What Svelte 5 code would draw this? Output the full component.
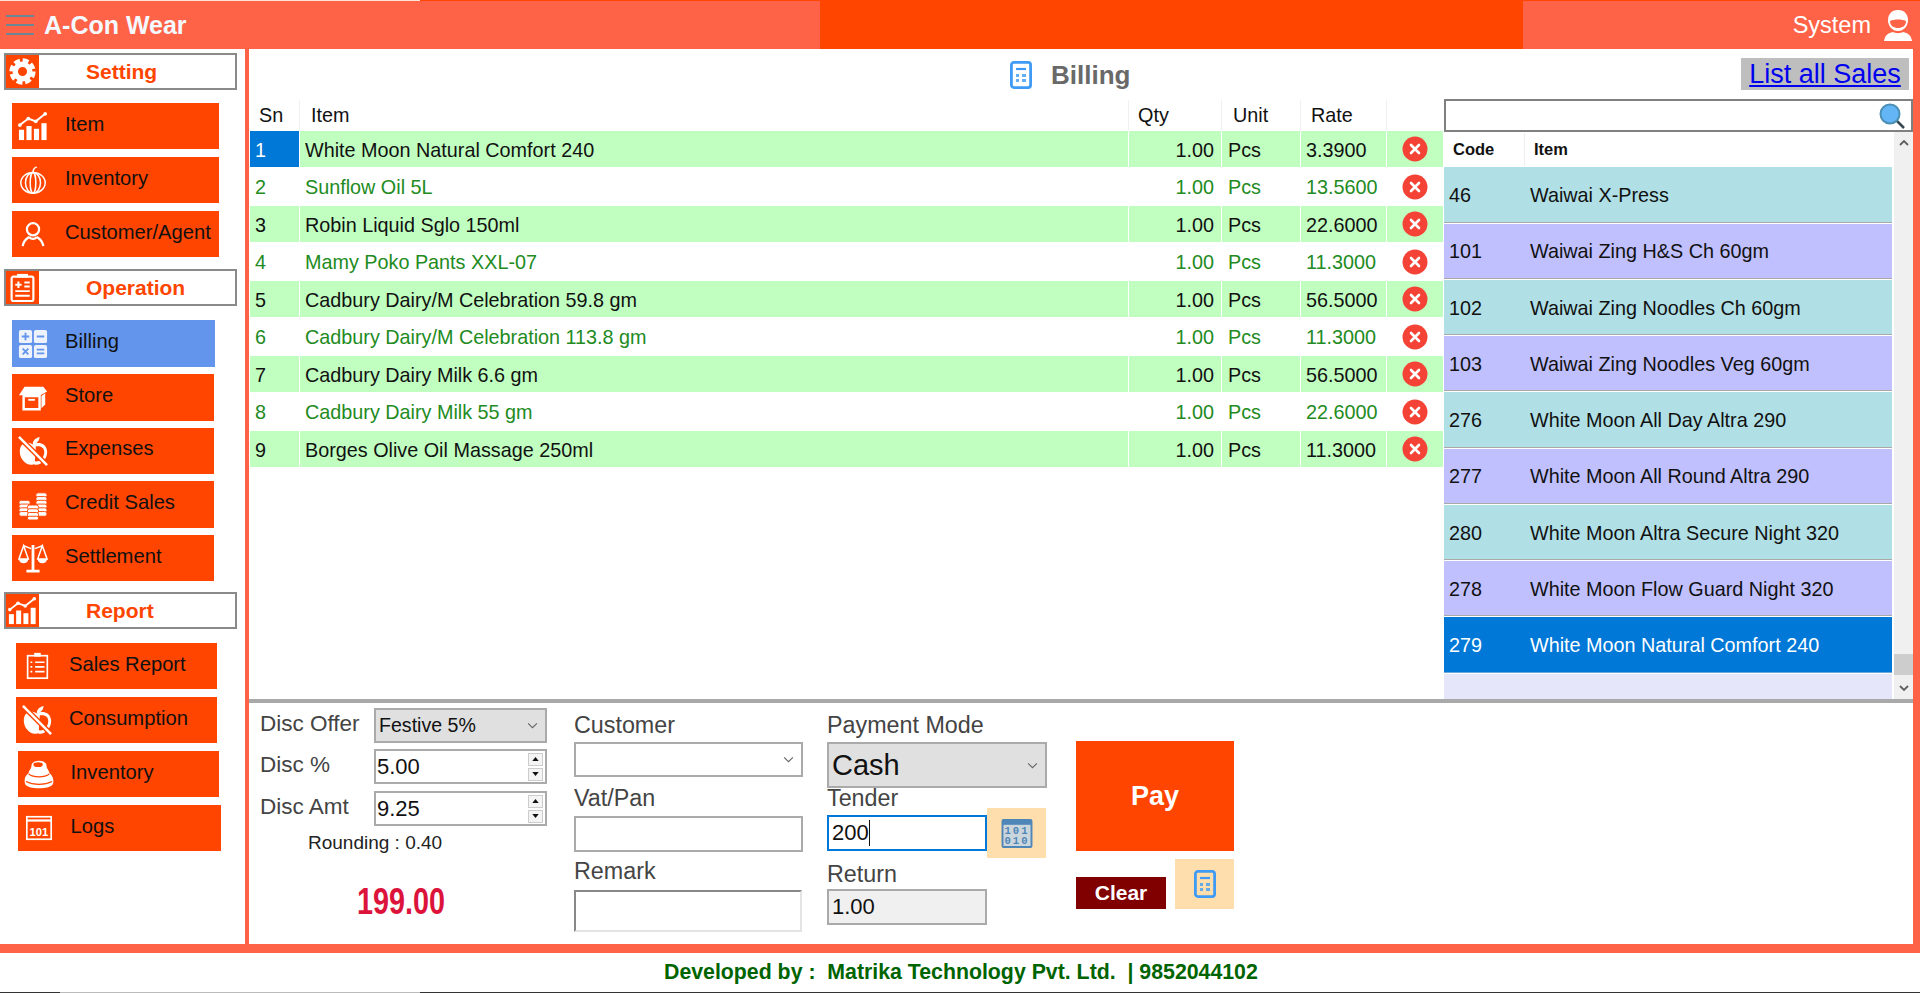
<script>
  const rows = [
    ['White Moon Natural Comfort 240', '3.3900'],
    ['Sunflow Oil 5L', '13.5600'],
    ['Robin Liquid Sglo 150ml', '22.6000'],
    ['Mamy Poko Pants XXL-07', '11.3000'],
    ['Cadbury Dairy/M Celebration 59.8 gm', '56.5000'],
    ['Cadbury Dairy/M Celebration 113.8 gm', '11.3000'],
    ['Cadbury Dairy Milk 6.6 gm', '56.5000'],
    ['Cadbury Dairy Milk 55 gm', '22.6000'],
    ['Borges Olive Oil Massage 250ml', '11.3000']
  ];

  const products = [
    ['46', 'Waiwai X-Press'],
    ['101', 'Waiwai Zing H&S Ch 60gm'],
    ['102', 'Waiwai Zing Noodles Ch 60gm'],
    ['103', 'Waiwai Zing Noodles Veg 60gm'],
    ['276', 'White Moon All Day Altra 290'],
    ['277', 'White Moon All Round Altra 290'],
    ['280', 'White Moon Altra Secure Night 320'],
    ['278', 'White Moon Flow Guard Night 320'],
    ['279', 'White Moon Natural Comfort 240']
  ];

  const menu = [
    { name: 'setting', title: 'Setting', icon: 'gear', items: [
      { label: 'Item', icon: 'chart' },
      { label: 'Inventory', icon: 'pumpkin' },
      { label: 'Customer/Agent', icon: 'user' }
    ]},
    { name: 'operation', title: 'Operation', icon: 'clipboard', items: [
      { label: 'Billing', icon: 'tiles', cls: 'active' },
      { label: 'Store', icon: 'box' },
      { label: 'Expenses', icon: 'apple' },
      { label: 'Credit Sales', icon: 'coins' },
      { label: 'Settlement', icon: 'scale' }
    ]},
    { name: 'report', title: 'Report', icon: 'chart', items: [
      { label: 'Sales Report', icon: 'list' },
      { label: 'Consumption', icon: 'apple' },
      { label: 'Inventory', icon: 'pot', cls: 'shift' },
      { label: 'Logs', icon: 'logs', cls: 'shift wide' }
    ]}
  ];
</script>

{#snippet icon(name)}
  <svg class="ico" viewBox="0 0 32 32" fill="none" stroke="#fff" stroke-width="2">
    {#if name === 'gear'}
      <circle cx="16" cy="16" r="8" stroke-width="6" />
      <circle cx="16" cy="16" r="12" stroke-width="5" stroke-dasharray="6.4 3" />
    {:else if name === 'chart'}
      <g fill="#fff" stroke="none">
        <rect x="1" y="20" width="5.500" height="11" />
        <rect x="9" y="16" width="5.500" height="15" />
        <rect x="17" y="19" width="5.500" height="12" />
        <rect x="25" y="13" width="5.500" height="18" />
        <circle cx="2" cy="15" r="2" /><circle cx="11" cy="8" r="2" /><circle cx="19" cy="11" r="2" /><circle cx="29" cy="3" r="2" />
      </g>
      <polyline points="2,15 11,8 19,11 29,3" />
    {:else if name === 'pumpkin'}
      <g stroke-width="1.6">
        <ellipse cx="16" cy="19" rx="13" ry="11" />
        <ellipse cx="16" cy="19" rx="8" ry="11" />
        <ellipse cx="16" cy="19" rx="3" ry="11" />
        <path d="M16 8 C16 5 17 3 20 2" />
      </g>
    {:else if name === 'user'}
      <g stroke-width="2.4">
        <circle cx="16" cy="11" r="6.5" />
        <path d="M5 29 C6 22 10 21 12 19 M27 29 C26 22 22 21 20 19 M12 19 C14 22 18 22 20 19" />
      </g>
    {:else if name === 'clipboard'}
      <rect x="4" y="4" width="24" height="27" rx="2" stroke-width="2.4" />
      <path d="M10 1 H22 V5 H10 Z" fill="#fff" stroke="none" />
      <path d="M8 13 H15 M11.500 9.500 V16.500 M18 10.500 H24 M18 15 H24 M8 20 H24 M8 25 H24" stroke-width="2.2" />
    {:else if name === 'tiles'}
      <g fill="#edf2fd" stroke="none">
        <rect x="1" y="1" width="14" height="14" rx="2" />
        <rect x="17" y="1" width="14" height="14" rx="2" />
        <rect x="1" y="17" width="14" height="14" rx="2" />
        <rect x="17" y="17" width="14" height="14" rx="2" />
      </g>
      <path d="M4 8 H12 M8 4 V12 M20 8 H28 M5 21 L11 27 M11 21 L5 27 M20 22 H28 M20 26 H28" stroke="#6495ed" />
    {:else if name === 'box'}
      <path d="M6 15 H23 V29 H6 Z" stroke-width="2.600" />
      <path d="M1 14 L7 5 H27 L31 10 L24 14 Z" fill="#fff" stroke="none" />
      <path d="M25 15 L29 12 V24 L25 28 Z" fill="#fff" stroke="none" />
      <path d="M11 19 H18" stroke-width="2" />
    {:else if name === 'apple'}
      <path d="M2 15 C3 6 11 6 16 9 C21 6 30 7 31 16 C32 25 23 33 17 30 C10 33 1 25 2 15 Z" fill="#fff" stroke="none" />
      <path d="M16 9 C15 6 18 2 23 1 C23 5 20 8 16 9 Z" fill="#fff" stroke="none" />
      <path d="M19 11 C25 10 28 13 28 17 C28 23 23 28 18 27 Z" fill="#ff4500" stroke="none" />
      <path d="M1 1 L31 31" stroke="#ff4500" stroke-width="5.500" />
      <path d="M1 1 L31 31" stroke-width="2.600" />
    {:else if name === 'coins'}
      <g fill="#fff" stroke="#ff4500" stroke-width="1">
        <rect x="1" y="11" width="12" height="5" rx="2.500" />
        <rect x="1" y="15" width="12" height="5" rx="2.500" />
        <rect x="1" y="19" width="12" height="5" rx="2.500" />
        <rect x="1" y="23" width="12" height="5" rx="2.500" />
        <rect x="19" y="3" width="12" height="5" rx="2.500" />
        <rect x="19" y="7" width="12" height="5" rx="2.500" />
        <rect x="19" y="11" width="12" height="5" rx="2.500" />
        <rect x="19" y="15" width="12" height="5" rx="2.500" />
        <rect x="19" y="19" width="12" height="5" rx="2.500" />
        <rect x="19" y="23" width="12" height="5" rx="2.500" />
        <rect x="10" y="16" width="12" height="5" rx="2.500" />
        <rect x="10" y="20" width="12" height="5" rx="2.500" />
        <rect x="10" y="24" width="12" height="5" rx="2.500" />
        <rect x="10" y="28" width="12" height="4" rx="2" />
      </g>
    {:else if name === 'scale'}
      <path d="M16 2 V29 M9 30 H23" stroke-width="3" />
      <path d="M6 3 L14 6 M18 6 L26 3" stroke-width="1.6" />
      <path d="M6 3 L1 17 H11 Z M26 3 L21 17 H31 Z" stroke-width="1.6" />
      <path d="M1 17 H11 C11 23 1 23 1 17 Z M21 17 H31 C31 23 21 23 21 17 Z" fill="#fff" stroke="none" />
    {:else if name === 'list'}
      <g stroke-width="1.8">
        <rect x="6" y="5" width="21" height="24" />
        <path d="M13 2 H20 V6 H13 Z" fill="#fff" stroke="none" />
        <path d="M9 12 H11 M14 12 H24 M9 17 H11 M14 17 H24 M9 22 H11 M14 22 H24" />
      </g>
    {:else if name === 'pot'}
      <path d="M8 7 C8 0 24 0 24 7 C24 11 27 12 27 15 C31 18 32 23 31 26 C29 33 3 33 1 26 C0 22 1 18 5 15 C5 12 8 11 8 7 Z" fill="#fff" stroke="none" />
      <ellipse cx="15" cy="6" rx="5" ry="2.500" fill="#ff4500" stroke="none" />
      <path d="M5 16 C10 20 22 20 27 16 M2 24 C10 28 22 28 30 24" stroke="#ff4500" stroke-width="1.200" />
    {:else if name === 'logs'}
      <rect x="3" y="4" width="26" height="24" stroke-width="1.8" />
      <path d="M3 8 H29" stroke-width="2.4" />
      <text x="16" y="24" text-anchor="middle" fill="#fff" stroke="none" font-size="12" font-weight="700" font-family="Liberation Sans, sans-serif">101</text>
    {/if}
  </svg>
{/snippet}

{#snippet calc()}
  <svg class="calc" viewBox="0 0 22 28" fill="none" stroke="#3f9bf5" stroke-width="2.800">
    <rect x="1.400" y="1.400" width="19.200" height="25.200" rx="2.500" />
    <path d="M6 8 H16" stroke-width="2.200" />
    <path d="M6 14.500 H9 M12 14.500 H16 M6 19.500 H9 M12 19.500 H16" stroke-width="3" opacity="0.8" />
  </svg>
{/snippet}

{#snippet chevron()}
  <svg class="chev" viewBox="0 0 10 6" fill="none" stroke="#666" stroke-width="1"><path d="M1 1 L5 5 L9 1" /></svg>
{/snippet}

{#snippet spinner()}
  <div class="spin">
    <span><svg viewBox="0 0 8 5"><path d="M4 0 L8 5 H0 Z" fill="#111" /></svg></span>
    <span><svg viewBox="0 0 8 5"><path d="M0 0 H8 L4 5 Z" fill="#111" /></svg></span>
  </div>
{/snippet}

<div class="page">
  <div class="topline"></div>
  <header>
    <div class="hleft">
      <div class="burger"><i></i><i></i><i></i></div>
      <span class="brand">A-Con Wear</span>
    </div>
    <div class="hmid"></div>
    <div class="hright">
      <span>System</span>
      <svg class="sysuser" viewBox="0 0 28 32" fill="#fff">
        <path d="M14 1 C21 1 24 6 24 11 C24 17 20 22 14 22 C8 22 4 17 4 11 C4 6 7 1 14 1 Z" />
        <path d="M6 12 C10 10 18 10 22 12 C22 17 18 19 14 19 C10 19 6 17 6 12 Z" fill="#ff6347" />
        <path d="M9 23 C11 24.500 17 24.500 19 23 C24 24 27 26 28 32 H0 C1 26 4 24 9 23 Z" />
      </svg>
    </div>
  </header>

  <div class="body">
    <aside>
      {#each menu as group}
        <section class={group.name}>
          <div class="ghead">
            <div class="gico">{@render icon(group.icon)}</div>
            <span>{group.title}</span>
          </div>
          {#each group.items as it}
            <div class="btn {it.cls || ''}">
              {@render icon(it.icon)}
              <span>{it.label}</span>
            </div>
          {/each}
        </section>
      {/each}
    </aside>

    <main>
      <div class="titlerow">
        <div class="title">
          {@render calc()}
          <span>Billing</span>
        </div>
        <a class="listall" href="#sales">List all Sales</a>
      </div>

      <div class="work">
        <div class="bill">
          <div class="grid head">
            <div>Sn</div><div>Item</div><div>Qty</div><div>Unit</div><div>Rate</div><div></div>
          </div>
          {#each rows as r, i}
            <div class="grid row" class:alt={i % 2 === 1}>
              <div class="sn" class:sel={i === 0}>{i + 1}</div>
              <div class="nm">{r[0]}</div>
              <div class="qty">1.00</div>
              <div class="unit">Pcs</div>
              <div class="rate">{r[1]}</div>
              <div class="del">
                <svg viewBox="0 0 26 26"><circle cx="13" cy="13" r="12.500" fill="#f44336" /><path d="M9 9 L17 17 M17 9 L9 17" stroke="#fff" stroke-width="2.600" stroke-linecap="round" /></svg>
              </div>
            </div>
          {/each}
        </div>

        <div class="picker">
          <div class="search">
            <svg viewBox="0 0 26 26">
              <path d="M17 17 L25 25" stroke="#37474f" stroke-width="2.500" />
              <circle cx="11" cy="11" r="9.500" fill="#64b5f6" stroke="#4b8fb5" stroke-width="2" />
            </svg>
          </div>
          <div class="pick-body">
            <div class="plist">
              <div class="phead"><div>Code</div><div>Item</div></div>
              {#each products as p, i}
                <div class="prow" class:odd={i % 2 === 1} class:sel={i === 8}>
                  <div class="pcode">{p[0]}</div>
                  <div>{p[1]}</div>
                </div>
              {/each}
              <div class="pfill"></div>
            </div>
            <div class="scroll">
              <svg viewBox="0 0 10 6" fill="none" stroke="#606060" stroke-width="1.800"><path d="M1 5 L5 1 L9 5" /></svg>
              <div class="thumb"></div>
              <svg viewBox="0 0 10 6" fill="none" stroke="#606060" stroke-width="1.800"><path d="M1 1 L5 5 L9 1" /></svg>
            </div>
          </div>
        </div>
      </div>

      <div class="form">
        <div class="c1">
          <div class="line first">
            <label for="offer">Disc Offer</label>
            <div class="box grey" id="offer"><span>Festive 5%</span>{@render chevron()}</div>
          </div>
          <div class="line">
            <label for="pct">Disc %</label>
            <div class="box num" id="pct"><span>5.00</span>{@render spinner()}</div>
          </div>
          <div class="line">
            <label for="amt">Disc Amt</label>
            <div class="box num" id="amt"><span>9.25</span>{@render spinner()}</div>
          </div>
          <div class="rounding">Rounding : 0.40</div>
          <div class="total">199.00</div>
        </div>

        <div class="c2">
          <div class="lb l-first">Customer</div>
          <div class="box cust">{@render chevron()}</div>
          <div class="lb l-vat">Vat/Pan</div>
          <div class="box vat"></div>
          <div class="lb l-rem">Remark</div>
          <div class="box remark"></div>
        </div>

        <div class="c3">
          <div class="lb l-first">Payment Mode</div>
          <div class="box grey mode"><span>Cash</span>{@render chevron()}</div>
          <div class="lb l-tender">Tender</div>
          <div class="tender-row">
            <div class="box tender"><span>200</span><i class="caret"></i></div>
            <div class="numpad">
              <svg viewBox="0 0 32 30">
                <rect x="1" y="1" width="30" height="28" rx="1" fill="#cbd6dc" stroke="#4f86b8" stroke-width="2" />
                <rect x="1" y="1" width="30" height="5" fill="#4f86b8" />
                <text x="16" y="16" text-anchor="middle" font-size="11" font-weight="700" letter-spacing="2" fill="#4f86b8" font-family="Liberation Mono, monospace">101</text>
                <text x="16" y="26" text-anchor="middle" font-size="11" font-weight="700" letter-spacing="2" fill="#4f86b8" font-family="Liberation Mono, monospace">010</text>
              </svg>
            </div>
          </div>
          <div class="lb l-return">Return</div>
          <div class="box ret"><span>1.00</span></div>
        </div>

        <div class="c4">
          <div class="pay">Pay</div>
          <div class="c4row">
            <div class="clear">Clear</div>
            <div class="calcbtn">{@render calc()}</div>
          </div>
        </div>
      </div>
    </main>
  </div>

  <footer>Developed by :  Matrika Technology Pvt. Ltd.  | 9852044102</footer>
  <div class="bottomline"></div>
</div>

<style>
  :global(body) {
    margin: 0;
    overflow: hidden;
    font-family: 'Liberation Sans', Arial, sans-serif;
  }

  .page {
    width: 1920px;
    height: 993px;
    display: flex;
    flex-direction: column;
    background: #fff;
    color: #111;
  }

  .topline {
    height: 1px;
    background: linear-gradient(to right, #ffe3d6 420px, #ff4500 420px);
  }

  header {
    height: 49px;
    display: flex;
    background: #ff6347;
    color: #fff;
  }
  .hleft {
    width: 820px;
    display: flex;
    align-items: center;
    padding-left: 6px;
    box-sizing: border-box;
  }
  .burger {
    width: 28px;
    display: flex;
    flex-direction: column;
    gap: 6.500px;
    margin-right: 10px;
  }
  .burger i {
    height: 2.500px;
    background: #6b8796;
  }
  .brand {
    font-size: 25px;
    font-weight: 700;
    color: #f4f8ff;
  }
  .hmid {
    width: 703px;
    background: #ff4500;
  }
  .hright {
    flex: 1;
    display: flex;
    align-items: center;
    justify-content: flex-end;
    font-size: 23.500px;
    padding-right: 8px;
  }
  .sysuser {
    width: 28px;
    height: 32px;
    margin-left: 13px;
  }

  .body {
    height: 895px;
    display: flex;
    background: #ff6347;
    padding-right: 7px;
  }

  aside {
    width: 245px;
    background: #fff;
    padding-top: 4px;
    box-sizing: border-box;
    margin-right: 4px;
  }
  .ghead {
    margin-left: 4px;
    width: 233px;
    height: 37px;
    box-sizing: border-box;
    border: 2px solid #8a8a8a;
    display: flex;
    align-items: center;
    color: #ff4500;
    font-size: 21px;
    font-weight: 700;
  }
  .gico {
    width: 33px;
    height: 33px;
    background: #ff4500;
    display: flex;
    align-items: center;
    justify-content: center;
    margin-right: 47px;
    flex: none;
  }
  .gico .ico {
    width: 29px;
    height: 29px;
    margin: 0;
  }
  .btn {
    height: 46px;
    background: #ff4500;
    display: flex;
    align-items: center;
    padding-left: 6px;
    box-sizing: border-box;
    font-size: 20.200px;
    margin-top: 8px;
  }
  .btn span {
    padding-bottom: 4px;
  }
  .ico {
    width: 30px;
    height: 30px;
    flex: none;
    margin-right: 17px;
  }
  .setting .btn {
    margin-left: 12px;
    width: 207px;
  }
  .setting .btn:nth-child(2) {
    margin-top: 13px;
  }
  .operation {
    margin-top: 12px;
  }
  .report {
    margin-top: 11px;
  }
  .operation .btn {
    margin-left: 12px;
    width: 202px;
    height: 46.600px;
    margin-top: 7px;
  }
  .operation .btn:nth-child(2) {
    margin-top: 14px;
  }
  .operation .btn.active {
    background: #6495ed;
    width: 203px;
  }
  .report .btn {
    margin-left: 16px;
    width: 201px;
  }
  .report .btn:nth-child(2) {
    margin-top: 14px;
  }
  .report .btn.shift {
    margin-left: 17.500px;
  }
  .report .btn.wide {
    width: 203px;
  }

  main {
    flex: 1;
    min-width: 0;
    background: #fff;
    display: flex;
    flex-direction: column;
  }
  .titlerow {
    height: 50px;
    display: flex;
    align-items: center;
    justify-content: space-between;
    padding: 0 4px 0 761px;
  }
  .title {
    display: flex;
    align-items: center;
    color: #696969;
    font-size: 26px;
    font-weight: 700;
    padding-top: 2px;
  }
  .calc {
    width: 22px;
    height: 28px;
    margin-right: 19px;
  }
  .listall {
    width: 168px;
    height: 32px;
    background: #bebebe;
    color: #0000ee;
    font-size: 27px;
    line-height: 32px;
    text-align: center;
  }

  .work {
    height: 600px;
    display: flex;
  }
  .bill {
    width: 1193px;
    margin-left: 1px;
    padding-top: 1px;
    font-size: 19.800px;
  }
  .grid {
    display: grid;
    grid-template-columns: 49px 828px 92px 78px 85px 56px;
    column-gap: 1px;
  }
  .head {
    height: 31px;
    line-height: 31px;
    background: #f1f1f1;
  }
  .head div {
    background: #fff;
  }
  .head div:nth-child(1) { padding-left: 9px; }
  .head div:nth-child(2) { padding-left: 11px; }
  .head div:nth-child(3) { padding-left: 9px; }
  .head div:nth-child(4) { padding-left: 11px; }
  .head div:nth-child(5) { padding-left: 10px; }

  .row {
    height: 36px;
    grid-template-rows: 100%;
    line-height: 38px;
  }
  .row > div {
    background: #c1ffc1;
  }
  .row.alt {
    height: 39px;
    line-height: 41px;
    color: #228b22;
  }
  .row.alt > div {
    background: #fff;
  }
  .row > .sn {
    padding-left: 5px;
  }
  .row > .sn.sel {
    background: #0078d7;
    color: #fff;
  }
  .nm {
    padding-left: 5px;
  }
  .qty {
    text-align: right;
    padding-right: 7px;
  }
  .unit {
    padding-left: 6px;
  }
  .rate {
    padding-left: 5px;
  }
  .del {
    display: flex;
    align-items: center;
    justify-content: center;
    padding-right: 1px;
  }
  .del svg {
    width: 26px;
    height: 26px;
  }

  .picker {
    width: 469px;
    margin-left: 1px;
    display: flex;
    flex-direction: column;
    font-size: 19.800px;
  }
  .search {
    height: 33px;
    box-sizing: border-box;
    border: 2px solid #808080;
    display: flex;
    align-items: center;
    justify-content: flex-end;
    padding-right: 6px;
  }
  .search svg {
    width: 26px;
    height: 26px;
  }
  .pick-body {
    flex: 1;
    display: flex;
    min-height: 0;
  }
  .plist {
    width: 448px;
    display: flex;
    flex-direction: column;
  }
  .phead {
    height: 35px;
    flex: none;
    display: flex;
    align-items: center;
    font-size: 16.500px;
    font-weight: 700;
  }
  .phead div:first-child {
    width: 81px;
    padding-left: 9px;
    box-sizing: border-box;
    height: 33px;
    line-height: 33px;
    border-right: 1px solid #eee;
  }
  .phead div:last-child {
    padding-left: 9px;
  }
  .prow {
    flex: none;
    box-sizing: border-box;
    height: 55.250px;
    padding-top: 2px;
    border-bottom: 1px solid #a9a9a9;
    margin-bottom: 1px;
    background: #b0e0e6;
    display: flex;
    align-items: center;
  }
  .prow.odd {
    background: #c0c0ff;
  }
  .prow.sel {
    background: #0078d7;
    color: #fff;
    border-bottom-color: #6aa8dc;
  }
  .pcode {
    width: 86px;
    padding-left: 5px;
    box-sizing: border-box;
  }
  .pfill {
    flex: 1;
    background: #e6e6fa;
  }
  .scroll {
    width: 19px;
    margin-left: 2px;
    background: #f0f0f0;
    display: flex;
    flex-direction: column;
    align-items: center;
  }
  .scroll svg {
    width: 10px;
    height: 6px;
    margin: 8px 0;
    flex: none;
  }
  .thumb {
    width: 100%;
    height: 21px;
    background: #cdcdcd;
    margin-top: auto;
    margin-bottom: 2px;
  }

  .form {
    height: 241px;
    box-sizing: content-box;
    border-top: 4px solid #a9a9a9;
    display: flex;
    font-size: 23.300px;
    color: #444;
  }
  .box {
    box-sizing: border-box;
    border: 2px solid #aaa;
    background: #fff;
    display: flex;
    align-items: center;
    justify-content: space-between;
    color: #111;
    padding: 0 4px;
  }
  .box.grey {
    background: #e0e0e0;
  }
  .chev {
    width: 11px;
    height: 7px;
    margin-left: auto;
    margin-right: 3px;
    flex: none;
  }

  .c1 {
    margin-left: 11px;
    width: 287px;
    padding-top: 5px;
    font-size: 22.500px;
  }
  .line {
    display: flex;
    align-items: center;
    height: 35px;
    margin-bottom: 7px;
  }
  .line.first {
    margin-bottom: 6px;
  }
  .line label {
    width: 114px;
    padding-bottom: 4px;
  }
  .line .box {
    width: 173px;
    height: 35px;
    font-size: 19.600px;
    padding-left: 3px;
  }
  .line .box.num {
    font-size: 22px;
    padding: 0 2px 0 1px;
  }
  .spin {
    display: flex;
    flex-direction: column;
    gap: 2px;
  }
  .spin span {
    width: 15px;
    height: 13px;
    box-sizing: border-box;
    border: 1px solid #ccc;
    background: #f4f4f4;
    display: flex;
    align-items: center;
    justify-content: center;
  }
  .spin svg {
    width: 7px;
    height: 4px;
  }
  .rounding {
    font-size: 19px;
    color: #222;
    margin: -2px 0 0 48px;
    line-height: 24px;
  }
  .total {
    width: 109px;
    margin: 27px 0 0 96.500px;
    line-height: 40px;
    font-size: 36px;
    font-weight: 700;
    color: #dc143c;
    transform: scaleX(0.8);
    transform-origin: left center;
    white-space: nowrap;
  }

  .lb {
    height: 24px;
    line-height: 24px;
  }
  .l-first {
    margin-top: 10px;
    margin-bottom: 5px;
  }
  .c2 {
    margin-left: 27px;
    width: 229px;
  }
  .cust {
    height: 35px;
  }
  .l-vat {
    margin-top: 9px;
    margin-bottom: 6px;
  }
  .vat {
    height: 36px;
  }
  .l-rem {
    margin-top: 7px;
    margin-bottom: 7px;
  }
  .remark {
    width: 228px;
    height: 42px;
    border-color: #888 #e4e4e4 #e4e4e4 #888;
  }

  .c3 {
    margin-left: 24px;
    width: 220px;
  }
  .mode {
    height: 46px;
    font-size: 29px;
    padding-left: 3px;
  }
  .l-tender {
    margin-bottom: -2px;
    margin-top: -2px;
  }
  .tender-row {
    display: flex;
    align-items: center;
    height: 50px;
  }
  .tender {
    width: 160px;
    height: 36px;
    border-color: #0078d7;
    justify-content: flex-start;
    padding-left: 3px;
    font-size: 22px;
  }
  .caret {
    width: 1px;
    height: 26px;
    background: #111;
    margin-left: 0;
  }
  .numpad {
    width: 59px;
    height: 50px;
    background: #ffdead;
    display: flex;
    align-items: center;
    justify-content: center;
  }
  .numpad svg {
    width: 32px;
    height: 29px;
  }
  .l-return {
    margin-top: 4px;
    margin-bottom: 3px;
  }
  .ret {
    width: 160px;
    height: 36px;
    background: #f0f0f0;
    padding-left: 3px;
    font-size: 22px;
  }

  .c4 {
    margin-left: 29px;
    width: 158px;
    padding-top: 38px;
  }
  .pay {
    height: 110px;
    background: #ff4500;
    color: #fff;
    font-size: 27px;
    font-weight: 700;
    display: flex;
    align-items: center;
    justify-content: center;
  }
  .c4row {
    display: flex;
    align-items: flex-end;
    margin-top: 8px;
  }
  .clear {
    width: 90px;
    height: 32px;
    line-height: 32px;
    text-align: center;
    background: #800000;
    color: #fff;
    font-size: 21px;
    font-weight: 700;
  }
  .calcbtn {
    width: 59px;
    height: 50px;
    margin-left: 9px;
    background: #ffdead;
    display: flex;
    align-items: center;
    justify-content: center;
  }
  .calcbtn .calc {
    margin-right: 0;
  }

  footer {
    height: 39px;
    border-top: 9px solid #ff6347;
    box-sizing: content-box;
    line-height: 38px;
    padding-left: 664px;
    font-size: 21.300px;
    font-weight: 700;
    color: #006400;
    white-space: pre;
  }
  .bottomline {
    height: 1px;
    background: linear-gradient(to right, #333 60px, #bbb 60px, #bbb 420px, #333 420px);
  }
</style>
